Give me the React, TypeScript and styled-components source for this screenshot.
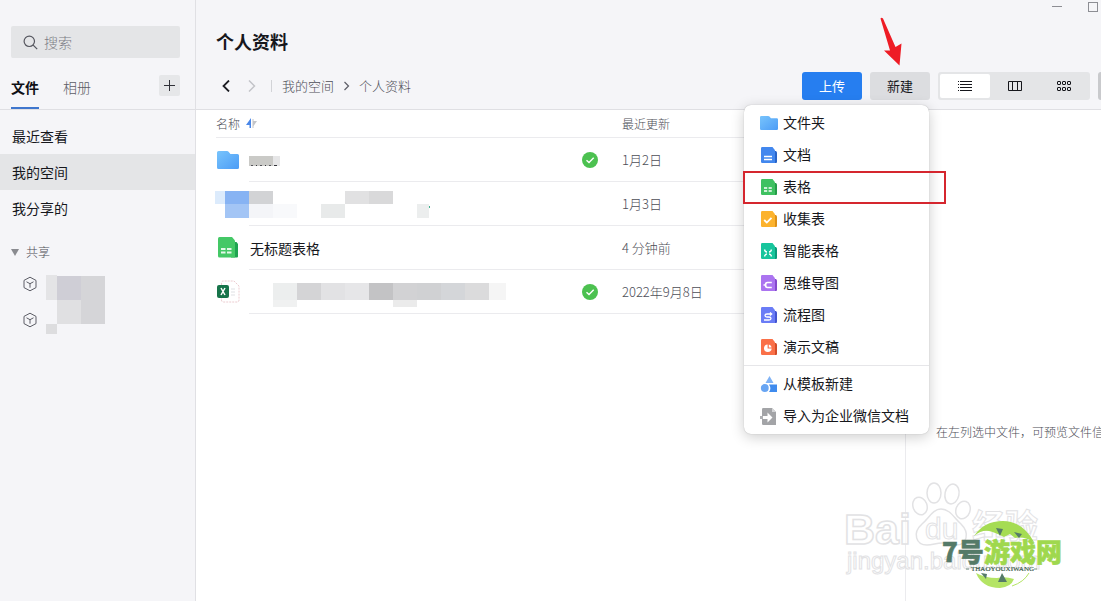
import React from "react";
import styled, { createGlobalStyle } from "styled-components";

const GlobalStyle = createGlobalStyle`
  * { box-sizing: border-box; }
  html, body { margin: 0; padding: 0; }
  body {
    font-family: "Noto Sans CJK SC", "Liberation Sans", sans-serif;
    font-weight: 300;
    font-size: 14px;
    line-height: 20px;
    color: #16171c;
    background: #fff;
    overflow: hidden;
  }
  button, input { font: inherit; color: inherit; border: 0; padding: 0; margin: 0; background: none; }
  button { cursor: pointer; }
  a { color: inherit; text-decoration: none; }
  ul { list-style: none; margin: 0; padding: 0; }
  svg { display: block; flex: none; }
`;

const Shell = styled.div`
  position: relative;
  display: flex;
  min-height: 100vh;
  overflow: hidden;
`;

/* ---------- sidebar ---------- */

const Sidebar = styled.aside`
  flex: none;
  width: 196px;
  padding-top: 26px;
  background: #f5f5f8;
  border-right: 1px solid #e0e0e4;
`;

const SearchBox = styled.label`
  display: flex;
  align-items: center;
  gap: 6px;
  height: 32px;
  margin: 0 15px 0 11px;
  padding: 0 12px;
  border-radius: 2px;
  background: #e4e5e7;
`;

const SearchInput = styled.input`
  flex: 1;
  min-width: 0;
  outline: none;
  &::placeholder { color: #7b7c84; opacity: 1; }
`;

const TabBar = styled.div`
  display: flex;
  align-items: stretch;
  gap: 24px;
  height: 52px;
  padding: 0 15px 0 11px;
  border-bottom: 1px solid #dfdfe3;
`;

const Tab = styled.button<{ $active?: boolean }>`
  padding-top: 8px;
  border-bottom: 2px solid ${(p) => (p.$active ? "#3f76cd" : "transparent")};
  font-weight: ${(p) => (p.$active ? 700 : 300)};
  color: ${(p) => (p.$active ? "#101116" : "#5c5d66")};
`;

const AddButton = styled.button`
  display: flex;
  align-items: center;
  justify-content: center;
  width: 21px;
  height: 21px;
  margin: 17px 0 0 auto;
  border-radius: 2px;
  background: #e6e7e9;
`;

const NavList = styled.ul`
  padding-top: 8px;
`;

const NavLink = styled.a<{ $active?: boolean }>`
  display: block;
  padding: 8px 12px;
  font-weight: 400;
  background: ${(p) => (p.$active ? "#e4e5e7" : "transparent")};
`;

const GroupToggle = styled.button`
  display: flex;
  align-items: center;
  gap: 7px;
  height: 28px;
  margin: 12px 0 0 11px;
  font-size: 12px;
  color: #4d4e57;
`;

const SharedSpaces = styled.div`
  display: flex;
  gap: 9px;
  padding-left: 23px;
`;

const SharedItem = styled.li`
  display: flex;
  align-items: center;
  height: 36px;
`;

const SharedNames = styled.div`
  padding-top: 9px;
`;

/* ---------- main ---------- */

const Main = styled.main`
  flex: 1;
  min-width: 0;
  display: flex;
  flex-direction: column;
`;

const Header = styled.header`
  background: #f5f5f8;
  border-bottom: 1px solid #dfdfe3;
  padding: 0 0 9px 20px;
`;

const WindowControls = styled.div`
  display: flex;
  justify-content: flex-end;
  gap: 22px;
  height: 14px;
  padding-right: 1px;
`;

const Title = styled.h1`
  margin: 12px 0 16px;
  font-size: 18px;
  line-height: 30px;
  font-weight: 700;
`;

const ToolRow = styled.div`
  display: flex;
  align-items: center;
  justify-content: space-between;
  height: 28px;
`;

const Crumbs = styled.nav`
  display: flex;
  align-items: center;
  gap: 8px;
  padding-left: 1px;
  font-size: 13px;
  color: #4d4e57;
`;

const ArrowButton = styled.button`
  display: flex;
  justify-content: center;
  width: 18px;
`;

const CrumbDivider = styled.span`
  width: 1px;
  height: 12px;
  margin: 0 2px;
  background: #d2d3d7;
`;

const Actions = styled.div`
  display: flex;
  gap: 8px;
  margin-right: -25px;
`;

const ActionButton = styled.button<{ $primary?: boolean }>`
  width: 60px;
  height: 28px;
  border-radius: 3px;
  font-size: 13px;
  font-weight: 400;
  color: ${(p) => (p.$primary ? "#fff" : "#16171c")};
  background: ${(p) => (p.$primary ? "#267ef0" : "#dcdde0")};
`;

const MoreButton = styled.button`
  width: 28px;
  height: 28px;
  border-radius: 3px;
  background: #c9cacd;
`;

const ViewSwitch = styled.div`
  display: flex;
  width: 152px;
  padding: 2px 1px 2px 2px;
  border-radius: 3px;
  background: #e4e5e7;
`;

const ViewButton = styled.button<{ $active?: boolean }>`
  display: flex;
  flex: 1;
  align-items: center;
  justify-content: center;
  border-radius: 2px;
  background: ${(p) => (p.$active ? "#fff" : "transparent")};
`;

const MenuAnchor = styled.div`
  position: relative;
`;

const PointerArrow = styled.svg`
  position: absolute;
  left: 10px;
  bottom: 34px;
  pointer-events: none;
`;

const Menu = styled.ul`
  position: absolute;
  z-index: 5;
  top: 33px;
  right: 1px;
  width: 185px;
  padding: 2px 0;
  border-radius: 7px;
  background: #fff;
  box-shadow: 0 3px 14px rgba(0, 0, 0, 0.2), 0 0 1px rgba(0, 0, 0, 0.3);
`;

const MenuRow = styled.li<{ $divided?: boolean }>`
  position: relative;
  ${(p) => p.$divided && "margin-top: 2px; padding-top: 2px; border-top: 1px solid #e6e6e9;"}
`;

const MenuButton = styled.button`
  display: flex;
  align-items: center;
  gap: 5px;
  width: 100%;
  height: 32px;
  padding-left: 16px;
  font-weight: 400;
`;

const MenuLabel = styled.span`
  padding-bottom: 2px;
`;

const Marker = styled.div`
  position: absolute;
  left: -1px;
  top: 0;
  width: 203px;
  height: 33px;
  border: 2px solid #d5262e;
  pointer-events: none;
`;

const Content = styled.div`
  flex: 1;
  display: flex;
`;

const FilePane = styled.section`
  flex: 1;
  min-width: 0;
  padding-left: 20px;
`;

const FileTable = styled.table`
  width: 100%;
  table-layout: fixed;
  border-collapse: separate;
  border-spacing: 0;
`;

const HeadCell = styled.th`
  height: 28px;
  padding: 0;
  border-bottom: 1px solid #ebebee;
  font-size: 12px;
  font-weight: 300;
  text-align: left;
  color: #4d4e57;
`;

const SortLabel = styled.span`
  display: flex;
  align-items: center;
  gap: 6px;
`;

const Cell = styled.td<{ $plain?: boolean; $muted?: boolean; $inset?: boolean }>`
  height: 44px;
  padding: 0 0 0 ${(p) => (p.$inset ? 1 : 0)}px;
  border-bottom: 1px solid ${(p) => (p.$plain ? "transparent" : "#ebebee")};
  font-size: ${(p) => (p.$muted ? 13 : 14)}px;
  font-weight: ${(p) => (p.$muted ? 300 : 400)};
  color: ${(p) => (p.$muted ? "#4d4e57" : "#16171c")};
  white-space: nowrap;
`;

const Preview = styled.aside`
  flex: none;
  width: 196px;
  padding: 312px 0 0 30px;
  border-left: 1px solid #ebebee;
  overflow: hidden;
  white-space: nowrap;
  font-size: 12px;
  color: #4d4e57;
`;

const Watermark = styled.svg`
  position: absolute;
  right: 31px;
  bottom: 7px;
  pointer-events: none;
`;

/* ---------- drawings ---------- */

type Block = [number, number, number, number, string];

const Mosaic = ({ w, h, blocks }: { w: number; h: number; blocks: Block[] }) => (
  <svg width={w} height={h} overflow="visible" aria-hidden="true" shapeRendering="crispEdges">
    {blocks.map(([x, y, bw, bh, fill], i) => (
      <rect key={i} x={x} y={y} width={bw} height={bh} fill={fill} />
    ))}
  </svg>
);

const spaceBlocks: Block[] = [
  [0, 0, 11, 25, "#e4e4e6"],
  [11, 1, 24, 24, "#cfced6"],
  [35, 1, 24, 48, "#d5d5d8"],
  [11, 25, 24, 24, "#e0e0e2"],
  [0, 49, 11, 10, "#dddddf"],
];

const folderNameBlocks: Block[] = [
  [0, 3, 24, 10, "#cacac7"],
  [24, 3, 7, 10, "#e6e6e7"],
  [2, 12, 2, 1, "#55565c"],
  [7, 12, 1, 1, "#33343a"],
  [11, 12, 2, 1, "#55565c"],
  [16, 12, 1, 1, "#33343a"],
  [20, 12, 2, 1, "#55565c"],
  [25, 12, 3, 1, "#33343a"],
];

const docIconBlocks: Block[] = [
  [-1, 0, 10, 13, "#dcebfc"],
  [9, 0, 24, 13, "#87b3f3"],
  [9, 13, 24, 14, "#a3c5f5"],
];

const docNameBlocks: Block[] = [
  [0, 0, 24, 13, "#d2d3d5"],
  [0, 13, 24, 14, "#f4f5f8"],
  [24, 13, 24, 14, "#f8f9fb"],
  [72, 13, 24, 14, "#e8eaea"],
  [96, 0, 24, 13, "#e1e1e2"],
  [120, 0, 24, 13, "#d9d9da"],
  [168, 13, 12, 14, "#eceeee"],
  [180, 15, 1, 2, "#3db08c"],
];

const xlsNameBlocks: Block[] = [
  [24, 0, 24, 17, "#eceeee"],
  [24, 17, 24, 7, "#f0f1f1"],
  [48, 0, 24, 17, "#d4d4d6"],
  [72, 0, 24, 17, "#e2e2e4"],
  [96, 0, 24, 17, "#e6e6e8"],
  [120, 0, 24, 17, "#c3c3c5"],
  [144, 0, 24, 17, "#d2d2d4"],
  [144, 17, 24, 7, "#ebebeb"],
  [168, 0, 24, 17, "#d0d1d3"],
  [192, 0, 24, 17, "#d4d6d9"],
  [216, 0, 24, 17, "#dbdbdc"],
  [240, 0, 17, 17, "#f5f5f5"],
];

const FolderIcon = ({ w, h }: { w: number; h: number }) => (
  <svg width={w} height={h} viewBox="0 0 22 18" preserveAspectRatio="none">
    <defs>
      <linearGradient id={`folder${w}`} x1="0" y1="0" x2="1" y2="1">
        <stop offset="0" stopColor="#78c4fc" />
        <stop offset="1" stopColor="#4c9cf6" />
      </linearGradient>
    </defs>
    <path
      d="M1.5 0H10q1 0 1.6.8L13.4 3H20.500q1.500 0 1.500 1.500V16.500q0 1.500-1.500 1.500H1.500Q0 18 0 16.500V1.500Q0 0 1.500 0z"
      fill={`url(#folder${w})`}
    />
  </svg>
);

const SheetIcon = () => (
  <svg width="21" height="21" viewBox="0 0 21 21">
    <path d="M14 5h5.500L21 7v12.500q0 1-1 1h-6z" fill="#1fa451" />
    <path d="M2.500 0H15l3 3.500V20.500H2.500Q1 20.500 1 19V1.500Q1 0 2.500 0z" fill="#44c866" />
    <path d="M4 11h4.500v2H4zM10 11h4.500v2H10zM4 14.500h4.500v2H4zM10 14.500h4.500v2H10z" fill="#e4f8e9" />
  </svg>
);

const ExcelIcon = () => (
  <svg width="23" height="23" viewBox="0 0 23 23">
    <path
      d="M4.500 5V3q0-2 2-2H17l5 5v14q0 2-2 2H6.500q-2 0-2-2v-3"
      fill="none"
      stroke="#ecccd0"
      strokeDasharray="2 1"
    />
    <path d="M14 9h4M14 12h4M14 15h4" stroke="#dfe1e4" />
    <rect x="0" y="5" width="12" height="13" rx="2" fill="#17744a" />
    <path d="M4 8l4 7M8 8l-4 7" stroke="#fff" strokeWidth="1.500" />
  </svg>
);

const CheckBadge = () => (
  <svg width="16" height="16" viewBox="0 0 16 16" role="img" aria-label="已同步">
    <circle cx="8" cy="8" r="8" fill="#4cc150" />
    <path d="M4.500 8.200l2.500 2.300 4.700-4.700" fill="none" stroke="#fff" strokeWidth="1.400" />
  </svg>
);

const CubeIcon = () => (
  <svg width="14" height="16" viewBox="0 0 14 16" fill="none" stroke="#5c5d66">
    <path d="M7 1.200l6 3.200v7.200l-6 3.200-6-3.200V4.400z" strokeLinejoin="round" />
    <path d="M3.500 5.800L7 7.700l3.500-1.900M7 7.700v4" />
  </svg>
);

const PageIcon = ({ front, side, children }: { front: string; side: string; children: React.ReactNode }) => (
  <svg width="18" height="16" viewBox="0 0 18 16">
    <path d="M12 4h4l1 1.200V15q0 1-1 1h-4z" fill={side} />
    <path d="M2.200 0H12.500L15 3.200V16H2.200Q1 16 1 14.800V1.200Q1 0 2.200 0z" fill={front} />
    <g fill="none" stroke="#fff" strokeWidth="1.500">
      {children}
    </g>
  </svg>
);

const menuItems: { label: string; icon: React.ReactNode; divided?: boolean; marked?: boolean }[] = [
  { label: "文件夹", icon: <FolderIcon w={18} h={14} /> },
  {
    label: "文档",
    icon: (
      <PageIcon front="#4287ee" side="#2864c8">
        <path d="M4 9.500h8M4 12.500h8" />
      </PageIcon>
    ),
  },
  {
    label: "表格",
    marked: true,
    icon: (
      <PageIcon front="#3fc161" side="#249c48">
        <path d="M4 9h3.200M8.600 9h3.200M4 12h3.200M8.600 12h3.200" />
      </PageIcon>
    ),
  },
  {
    label: "收集表",
    icon: (
      <PageIcon front="#fcb32e" side="#dc9018">
        <path d="M4.200 9l2.600 2.600 4.700-4.700" strokeWidth="1.800" />
      </PageIcon>
    ),
  },
  {
    label: "智能表格",
    icon: (
      <PageIcon front="#17c59c" side="#0b9a78">
        <path d="M4.500 6.500Q5 9 7 9M11.500 6.500Q11 9 9 9M4.500 13.500Q5 11 7 11M11.500 13.500Q11 11 9 11" strokeWidth="1.300" />
      </PageIcon>
    ),
  },
  {
    label: "思维导图",
    icon: (
      <PageIcon front="#ab74f0" side="#8449cc">
        <path d="M11.800 7.500H7.500Q5.500 7.500 5.500 10t2 2.500h4.300M3.500 10h3" strokeWidth="1.600" />
      </PageIcon>
    ),
  },
  {
    label: "流程图",
    icon: (
      <PageIcon front="#6a7cf6" side="#4354cf">
        <path d="M11.500 7H7Q5 7 5 8.500T7 10h2q2 0 2 1.500T9 13H4M10 5.500L11.700 7 10 8.500" strokeWidth="1.300" />
      </PageIcon>
    ),
  },
  {
    label: "演示文稿",
    icon: (
      <PageIcon front="#fa7048" side="#d24c28">
        <circle cx="7.800" cy="9.200" r="3.800" fill="#fff" stroke="none" />
        <path d="M8.200 5v4h4" stroke="#fa7048" strokeWidth="1.200" />
      </PageIcon>
    ),
  },
  {
    label: "从模板新建",
    divided: true,
    icon: (
      <svg width="18" height="16" viewBox="0 0 18 16">
        <path d="M9.500 0l4 7h-8z" fill="#7fb2f5" />
        <circle cx="4.800" cy="12" r="3.900" fill="#68a5f3" />
        <path d="M9 8.500h8V16H9q2.800-3.700 0-7.500z" fill="#3f8bee" />
      </svg>
    ),
  },
  {
    label: "导入为企业微信文档",
    icon: (
      <svg width="18" height="17" viewBox="0 0 18 17">
        <path d="M3.200 0H12l4 4V17H3.200Q2 17 2 15.800V1.200Q2 0 3.200 0z" fill="#a3a4a7" />
        <path d="M12 0v4h4z" fill="#d4d5d7" />
        <path d="M2 8h5.500V4.500L12.500 9.500l-5 5V11H2z" fill="#fff" />
        <path d="M0 8h3v3H0z" fill="#b0b1b4" />
      </svg>
    ),
  },
];

const files: {
  icon: React.ReactNode;
  name: React.ReactNode;
  censored?: { icon?: boolean; name?: boolean };
  synced?: boolean;
  updated: string;
}[] = [
  {
    icon: <FolderIcon w={22} h={18} />,
    name: <Mosaic w={31} h={13} blocks={folderNameBlocks} />,
    censored: { name: true },
    synced: true,
    updated: "1月2日",
  },
  {
    icon: <Mosaic w={33} h={26} blocks={docIconBlocks} />,
    name: <Mosaic w={181} h={26} blocks={docNameBlocks} />,
    censored: { icon: true, name: true },
    updated: "1月3日",
  },
  { icon: <SheetIcon />, name: "无标题表格", updated: "4 分钟前" },
  {
    icon: <ExcelIcon />,
    name: <Mosaic w={257} h={18} blocks={xlsNameBlocks} />,
    censored: { name: true },
    synced: true,
    updated: "2022年9月8日",
  },
];

const SiteMarks = () => (
  <Watermark width="230" height="116" viewBox="840 478 230 116" aria-hidden="true">
    <g fill="#fff" fillOpacity="0.7" stroke="#e2e2e4" strokeWidth="1.500">
      <ellipse cx="920" cy="506" rx="7" ry="9" transform="rotate(-20 920 506)" />
      <ellipse cx="934" cy="493" rx="7" ry="10" />
      <ellipse cx="952" cy="494" rx="7" ry="10" transform="rotate(12 952 494)" />
      <ellipse cx="963" cy="510" rx="7" ry="9" transform="rotate(20 963 510)" />
      <path d="M941 509c-8 0-12 9-19 15-10 9-6 21 5 21 6 0 9-2 15-2s9 2 14 2c11 0 14-12 5-21-7-6-11-15-20-15z" />
      <g fontFamily="Liberation Sans, sans-serif">
        <text x="844" y="544" fontSize="43" fontWeight="700">Bai</text>
        <text x="925" y="539" fontSize="30" strokeWidth="1">du</text>
      </g>
      <text x="972" y="538" fontSize="33" fontWeight="700" fontFamily="Noto Sans CJK SC, sans-serif" strokeWidth="1">经验</text>
      <text x="847" y="569" fontSize="24" fontFamily="Liberation Sans, sans-serif" strokeWidth="1">jingyan.baidu.com</text>
    </g>
    <path d="M974 536Q984 521 1003 521T1034 542Q1024 536 1015 538L1010 534 1004 537Q994 532 989 531Q981 530 974 536z" fill="#a5dc53" />
    <path d="M976 573Q985 578 997 578 1005 576 1014 579 1011 587 1000 588 982 588 976 573z" fill="#b4e465" />
    <path d="M1012 586Q1024 582 1029 573" fill="none" stroke="#b4e465" strokeWidth="1" />
    <path d="M996 528l7 1-3 7zM1014 532l8 2-3 4zM981 573l6 1-1 5zM1002 573l5 9h-9z" fill="#557a68" />
    <g fontFamily="Noto Sans CJK SC, sans-serif" fontWeight="900" fontSize="26" strokeWidth="0.600">
      <text x="942" y="562" fill="#557a68" stroke="#557a68">7号</text>
      <text x="984" y="562" fill="#9fd84e" stroke="#9fd84e">游戏网</text>
    </g>
    <text x="971" y="571" fontFamily="Liberation Serif, serif" fontSize="7" fill="#3d5b4d" stroke="#3d5b4d" strokeWidth="0.200">THAOYOUXIWANG</text>
    <path d="M966 569h3M1034 569h3" stroke="#557a68" strokeWidth="0.800" />
  </Watermark>
);

/* ---------- page ---------- */

export default function App() {
  return (
    <>
      <GlobalStyle />
      <Shell>
        <Sidebar>
          <SearchBox>
            <svg width="15" height="15" viewBox="0 0 15 15" fill="none" stroke="#55565e" strokeWidth="1.200">
              <circle cx="6.300" cy="6.300" r="5.200" />
              <path d="M10.200 10.200l4 4" />
            </svg>
            <SearchInput type="text" placeholder="搜索" aria-label="搜索" />
          </SearchBox>
          <TabBar>
            <Tab $active>文件</Tab>
            <Tab>相册</Tab>
            <AddButton aria-label="添加">
              <svg width="13" height="13" viewBox="0 0 13 13" stroke="#303138">
                <path d="M1 6.500h11M6.500 1v11" />
              </svg>
            </AddButton>
          </TabBar>
          <NavList>
            <li><NavLink href="#recent">最近查看</NavLink></li>
            <li><NavLink href="#mine" $active>我的空间</NavLink></li>
            <li><NavLink href="#shared">我分享的</NavLink></li>
          </NavList>
          <GroupToggle>
            <svg width="8" height="7" viewBox="0 0 8 7" fill="#8a8b90">
              <path d="M0 0h8L4 7z" />
            </svg>
            共享
          </GroupToggle>
          <SharedSpaces>
            <ul>
              <SharedItem><CubeIcon /></SharedItem>
              <SharedItem><CubeIcon /></SharedItem>
            </ul>
            <SharedNames>
              <Mosaic w={59} h={59} blocks={spaceBlocks} />
            </SharedNames>
          </SharedSpaces>
        </Sidebar>

        <Main>
          <Header>
            <WindowControls>
              <button aria-label="最小化">
                <svg width="14" height="14" viewBox="0 0 14 14" stroke="#8d8e94">
                  <path d="M2 6.500h10" />
                </svg>
              </button>
              <button aria-label="最大化">
                <svg width="14" height="14" viewBox="0 0 14 14" fill="none" stroke="#8d8e94">
                  <rect x="2.500" y="2.500" width="9" height="9" />
                </svg>
              </button>
            </WindowControls>
            <Title>个人资料</Title>
            <ToolRow>
              <Crumbs aria-label="路径">
                <ArrowButton aria-label="后退">
                  <svg width="8" height="12" viewBox="0 0 8 12" fill="none" stroke="#1d1e24" strokeWidth="1.800">
                    <path d="M7 .5L1.500 6 7 11.500" />
                  </svg>
                </ArrowButton>
                <ArrowButton aria-label="前进">
                  <svg width="8" height="12" viewBox="0 0 8 12" fill="none" stroke="#c3c4c8" strokeWidth="1.500">
                    <path d="M1 .5L6.500 6 1 11.500" />
                  </svg>
                </ArrowButton>
                <CrumbDivider />
                <a href="#mine">我的空间</a>
                <svg width="9" height="10" viewBox="0 0 9 10" fill="none" stroke="#5c5d66" strokeWidth="1.200">
                  <path d="M2.500 1l4 4-4 4" />
                </svg>
                <a href="#profile">个人资料</a>
              </Crumbs>
              <Actions>
                <ActionButton $primary>上传</ActionButton>
                <MenuAnchor>
                  <ActionButton aria-haspopup="menu" aria-expanded="true">新建</ActionButton>
                  <PointerArrow width="24" height="50" viewBox="0 0 24 50">
                    <path d="M.5 2.500Q1.500 1 3 2.500L15.500 31l6-3.500L19.500 49.500 4 34.500h6z" fill="#ee1c25" />
                  </PointerArrow>
                  <Menu>
                    {menuItems.map((item) => (
                      <MenuRow key={item.label} $divided={item.divided}>
                        <MenuButton>
                          {item.icon}
                          <MenuLabel>{item.label}</MenuLabel>
                        </MenuButton>
                        {item.marked && <Marker />}
                      </MenuRow>
                    ))}
                  </Menu>
                </MenuAnchor>
                <ViewSwitch>
                  <ViewButton $active aria-label="列表">
                    <svg width="14" height="12" viewBox="0 0 14 12" stroke="#15161b" shapeRendering="crispEdges">
                      <path d="M0 1.500h1M2 1.500h12M0 4.500h1M2 4.500h12M0 7.500h1M2 7.500h12M0 10.500h1M2 10.500h12" />
                    </svg>
                  </ViewButton>
                  <ViewButton aria-label="分栏">
                    <svg width="14" height="10" viewBox="0 0 14 10" fill="none" stroke="#15161b">
                      <path d="M.5.5h13v9H.5zM4.500.5v9M9.500.5v9" />
                    </svg>
                  </ViewButton>
                  <ViewButton aria-label="网格">
                    <svg width="14" height="10" viewBox="0 0 14 10" fill="none" stroke="#15161b">
                      {[0.5, 5.5, 10.5].map((x) =>
                        [0.5, 6.5].map((y) => <rect key={`${x}-${y}`} x={x} y={y} width="3" height="3" rx="0.500" />)
                      )}
                    </svg>
                  </ViewButton>
                </ViewSwitch>
                <MoreButton aria-label="更多" />
              </Actions>
            </ToolRow>
          </Header>

          <Content>
            <FilePane>
              <FileTable>
                <colgroup>
                  <col style={{ width: 33 }} />
                  <col />
                  <col style={{ width: 40 }} />
                  <col style={{ width: 283 }} />
                </colgroup>
                <thead>
                  <tr>
                    <HeadCell colSpan={3}>
                      <SortLabel>
                        名称
                        <svg width="11" height="11" viewBox="0 0 11 11">
                          <path d="M5 0v10H3.500V7H0z" fill="#4a87e8" />
                          <path d="M6.500 1h1v2H11L7.500 8v2h-1z" fill="#c3c5c9" />
                        </svg>
                      </SortLabel>
                    </HeadCell>
                    <HeadCell>最近更新</HeadCell>
                  </tr>
                </thead>
                <tbody>
                  {files.map((file) => (
                    <tr key={file.updated}>
                      <Cell $plain $inset={!file.censored?.icon}>{file.icon}</Cell>
                      <Cell $inset={!file.censored?.name}>{file.name}</Cell>
                      <Cell>{file.synced && <CheckBadge />}</Cell>
                      <Cell $muted>{file.updated}</Cell>
                    </tr>
                  ))}
                </tbody>
              </FileTable>
            </FilePane>
            <Preview>在左列选中文件，可预览文件信息</Preview>
          </Content>
        </Main>
        <SiteMarks />
      </Shell>
    </>
  );
}
